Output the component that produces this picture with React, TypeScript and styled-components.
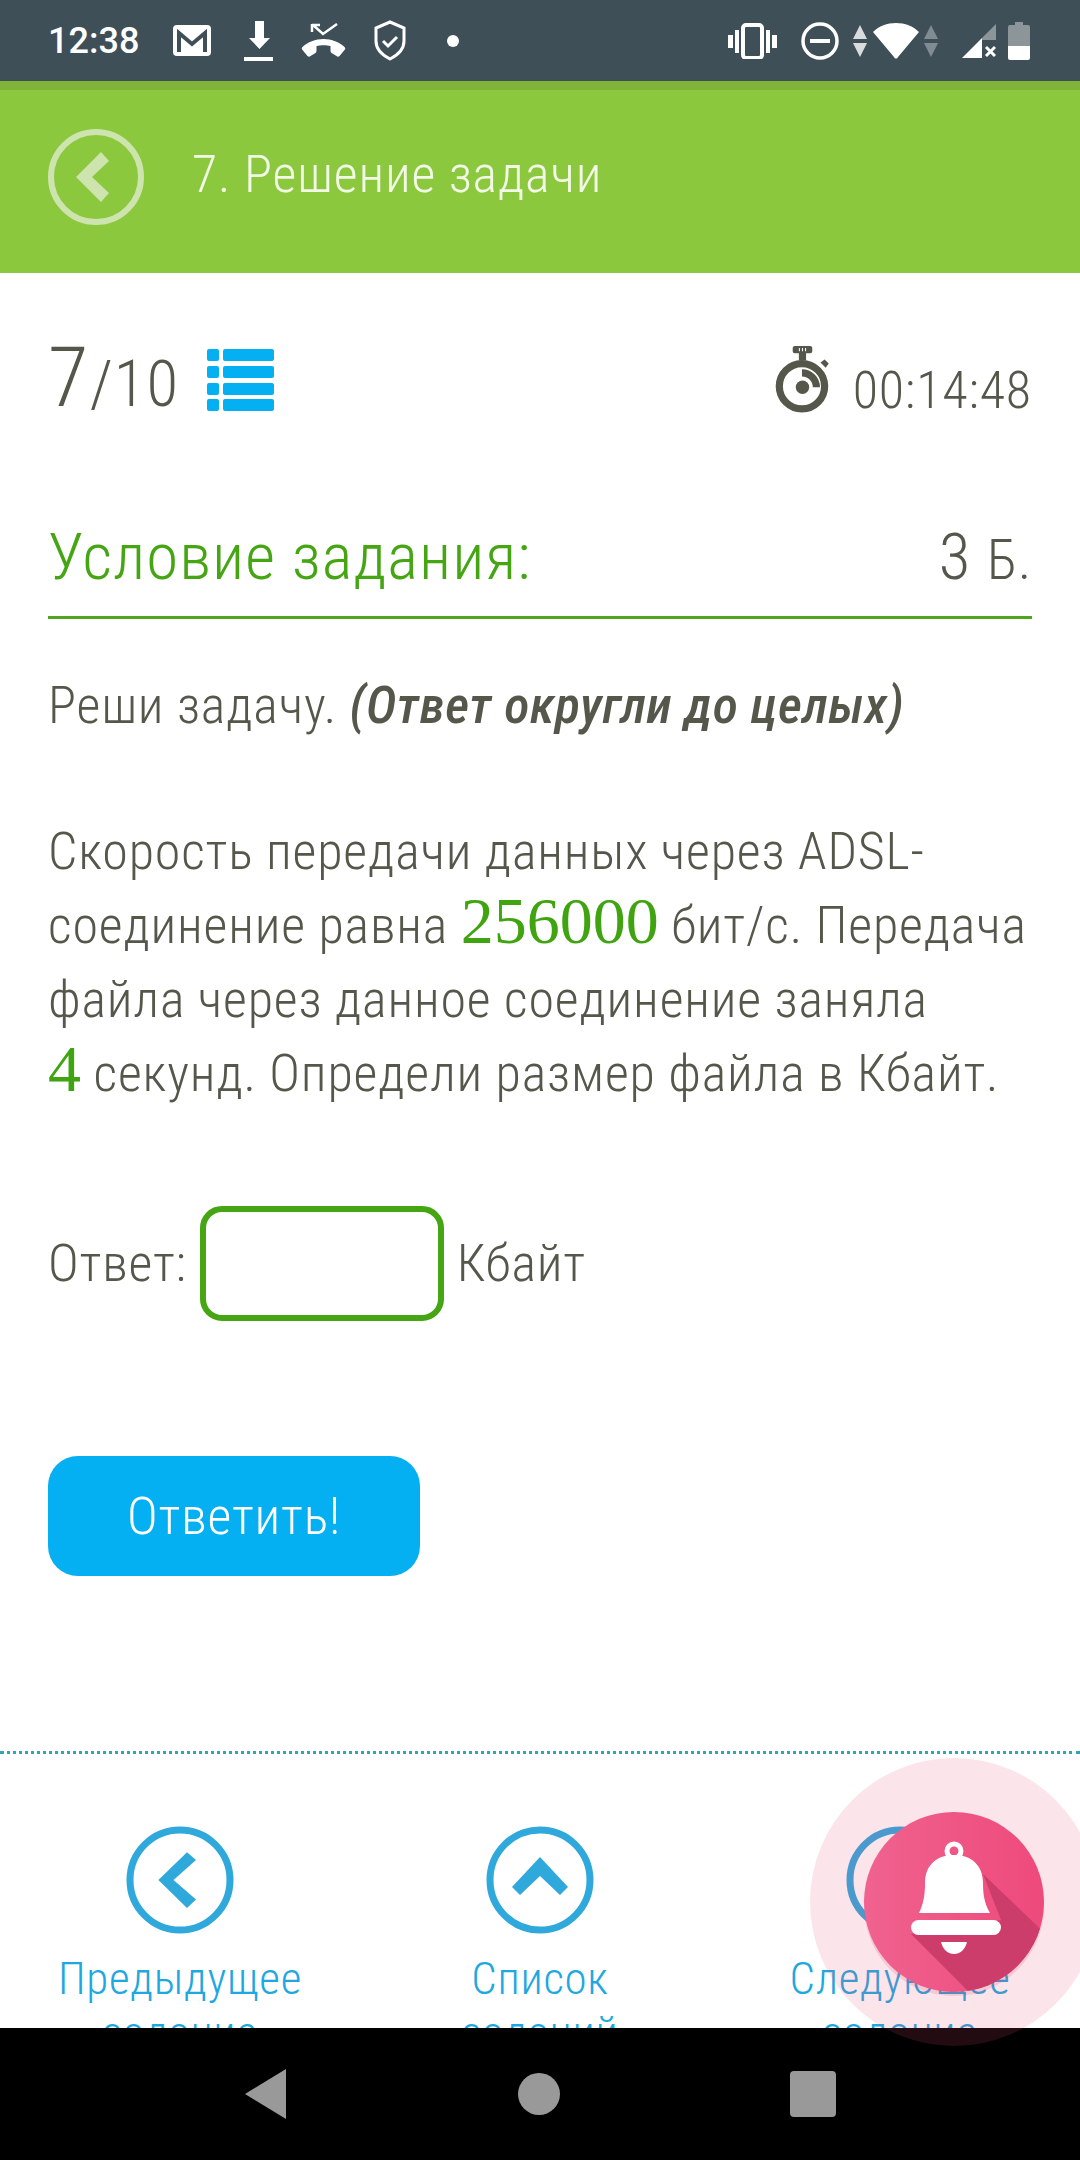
import React from 'react'
import styled, {createGlobalStyle} from 'styled-components'

const GlobalStyle = createGlobalStyle`
  html, body {
    margin: 0;
    padding: 0;
    background: #fff;
  }
  body {
    font-family: Roboto, "Noto Sans", sans-serif;
    font-weight: 300;
    font-stretch: 85%;
    color: #55574b;
  }
  * {
    letter-spacing: 0.016em;
  }
`

const Screen = styled.div`
  position: relative;
  width: 1080px;
  height: 2160px;
  display: flex;
  flex-direction: column;
  overflow: hidden;
  background: #fff;
`

const StatusBar = styled.div`
  height: 81px;
  flex: none;
  display: flex;
  align-items: center;
  padding: 0 50px 0 48px;
  background: #3e4f58;
`

const Clock = styled.span`
  font-size: 36px;
  font-weight: 500;
  font-stretch: 100%;
  letter-spacing: 0;
  color: #fff;
  width: 89px;
  margin-right: 36px;
`

const StatusIcon = styled.svg<{$left?: number}>`
  flex: none;
  margin-left: ${p => p.$left ?? 0}px;
`

const StatusRight = styled.div`
  margin-left: auto;
  display: flex;
  align-items: center;
`

const Header = styled.header`
  height: 192px;
  box-sizing: border-box;
  flex: none;
  display: flex;
  align-items: center;
  gap: 48px;
  padding: 0 0 9px 48px;
  background: #8bc83e;
  border-top: 9px solid #7fb439;
`

const HeaderTitle = styled.h1`
  margin: 0 0 6px;
  font-size: 52px;
  font-weight: 300;
  color: #f2f9e6;
`

const Main = styled.main`
  flex: 1;
  min-height: 0;
  overflow: hidden;
  display: flex;
  flex-direction: column;
`

const Content = styled.div`
  padding: 72px 48px 0;
  height: 1481px;
  box-sizing: border-box;
  flex: none;
  border-bottom: 3px dotted #30a5b5;
`

const TopRow = styled.div`
  display: flex;
  align-items: flex-end;
  height: 78px;
`

const Progress = styled.div`
  font-size: 65px;
  line-height: 78px;
  display: flex;
  align-items: baseline;
`

const ProgressCurrent = styled.span`
  font-size: 83px;
`

const ListIcon = styled.svg`
  margin: 0 0 12px 28px;
  align-self: flex-end;
`

const Timer = styled.div`
  margin-left: auto;
  display: flex;
  align-items: flex-end;
  gap: 22px;
  font-size: 52px;
  line-height: 64px;
`

const StopwatchIcon = styled.svg`
  margin-bottom: 10px;
`

const TaskHead = styled.div`
  margin-top: 90px;
  height: 106px;
  box-sizing: border-box;
  padding-bottom: 16px;
  border-bottom: 3px solid #4ea520;
  display: flex;
  justify-content: space-between;
  align-items: center;
`

const TaskTitle = styled.h2`
  margin: 0;
  font-size: 65px;
  font-weight: 300;
  color: #45a512;
`

const TaskPoints = styled.span`
  font-size: 65px;
`

const PointsUnit = styled.span`
  font-size: 55px;
`

const Paragraph = styled.p<{$top: number}>`
  margin: ${p => p.$top}px 0 0;
  font-size: 52px;
  line-height: 74px;
`

const Hint = styled.em`
  font-style: italic;
  font-weight: 500;
  letter-spacing: 0.008em;
`

const MathValue = styled.span`
  font-family: "Liberation Serif", serif;
  font-size: 66px;
  line-height: 0;
  font-weight: 400;
  font-stretch: 100%;
  letter-spacing: 0;
  color: #3fa40f;
`

const AnswerRow = styled.div`
  margin-top: 95px;
  display: flex;
  align-items: center;
  gap: 13px;
  font-size: 52px;
`

const AnswerInput = styled.div`
  width: 244px;
  height: 115px;
  box-sizing: border-box;
  border: 6px solid #45a512;
  border-radius: 22px;
`

const SubmitButton = styled.button`
  display: block;
  margin-top: 135px;
  width: 372px;
  height: 120px;
  border: 0;
  border-radius: 30px;
  background: #04aff2;
  color: #fff;
  font-family: inherit;
  font-stretch: inherit;
  font-size: 52px;
  font-weight: 300;
`

const TaskNav = styled.nav`
  display: grid;
  grid-template-columns: repeat(3, 1fr);
  padding: 72px 0 0;
  justify-items: center;
`

const NavItem = styled.a`
  display: flex;
  flex-direction: column;
  align-items: center;
  width: 300px;
  text-align: center;
  font-size: 45px;
  line-height: 54px;
  color: #1fa8df;
`

const NavCircle = styled.svg`
  margin-bottom: 18px;
`

const SystemNav = styled.div`
  height: 132px;
  flex: none;
  background: #000;
  display: flex;
  align-items: center;
  justify-content: center;
  gap: 230px;
`

const BellButton = styled.svg`
  position: absolute;
  left: 810px;
  top: 1758px;
`

function Chevron({points}: {points: string}) {
  return (
    <NavCircle width="108" height="108" viewBox="-54 -54 108 108">
      <circle r="50" fill="none" stroke="#2fa8dc" strokeWidth="7" />
      <polygon points={points} fill="#2fa8dc" />
    </NavCircle>
  )
}

const CHEVRON_LEFT = '-21.6,0 7,-27.7 16,-20 -6.5,0 16,19.5 7,28'
const CHEVRON_UP = '0,-23 -28,7 -20,15 0,-4 20,15 28,7'

export default function App() {
  return (
    <Screen>
      <GlobalStyle />
      <StatusBar>
        <Clock>12:38</Clock>
        <StatusIcon width="38" height="31" viewBox="0 0 38 31">
          <rect width="38" height="31" rx="4" fill="#fff" />
          <path fill="none" stroke="#3e4f58" strokeWidth="4" d="M6 27V8l13 11L32 8v19" />
        </StatusIcon>
        <StatusIcon $left={33} width="29" height="40" viewBox="0 0 29 40">
          <path fill="#fff" d="M11 0h9v17h6L15.500 28 5 17h6zM0 36h29v4H0z" />
        </StatusIcon>
        <StatusIcon $left={28} width="45" height="36" viewBox="0 0 45 36">
          <path fill="none" stroke="#fff" strokeWidth="2.500" d="M12 2l10 9L36 1M11 1v8M11 2h8" />
          <path
            fill="#fff"
            d="M22.500 16c8 0 16 3 21 8 1 1 1 2 0 3l-5 6c-1 1-2 1-3 0l-5-3c-1-1-1-2-1-3v-4c-4-1-10-1-14 0v4c0 1 0 2-1 3l-5 3c-1 1-2 1-3 0l-5-6c-1-1-1-2 0-3 5-5 13-8 21-8z"
          />
        </StatusIcon>
        <StatusIcon $left={28} width="32" height="41" viewBox="0 0 32 41">
          <path fill="none" stroke="#fff" strokeWidth="3" d="M16 2l14 6v13c0 8-6 14-14 18C8 35 2 29 2 21V8z" />
          <path fill="none" stroke="#fff" strokeWidth="3" d="M9 21l5 5 9-9" />
        </StatusIcon>
        <StatusIcon $left={41} width="12" height="12" viewBox="0 0 12 12">
          <circle cx="6" cy="6" r="6" fill="#fff" />
        </StatusIcon>
        <StatusRight>
          <StatusIcon width="49" height="36" viewBox="0 0 49 36">
            <path fill="#fff" d="M0 12h5v13H0zM44 12h5v13h-5zM7 7h4v23H7zM38 7h4v23h-4z" />
            <rect x="15" y="2" width="19" height="33" rx="3" fill="none" stroke="#fff" strokeWidth="4" />
          </StatusIcon>
          <StatusIcon $left={24} width="38" height="38" viewBox="0 0 38 38">
            <circle cx="19" cy="19" r="17" fill="none" stroke="#fff" strokeWidth="3.500" />
            <path fill="#fff" d="M9 17h20v4H9z" />
          </StatusIcon>
          <StatusIcon $left={14} width="14" height="32" viewBox="0 0 14 32">
            <path fill="#fff" fillOpacity=".8" d="M7 0l7 14H0zM0 18h14L7 32z" />
          </StatusIcon>
          <StatusIcon $left={6} width="46" height="36" viewBox="0 0 46 36">
            <path fill="#fff" d="M0 9C6 3 14 0 23 0s17 3 23 9L25 34c-1 2-3 2-4 0z" />
          </StatusIcon>
          <StatusIcon $left={5} width="14" height="32" viewBox="0 0 14 32">
            <path fill="#fff" fillOpacity=".35" d="M7 0l7 14H0zM0 18h14L7 32z" />
          </StatusIcon>
          <StatusIcon $left={24} width="34" height="34" viewBox="0 0 34 34">
            <path fill="#fff" fillOpacity=".4" d="M34 0v16H20V14z" />
            <path fill="#fff" d="M0 34L20 14v20z" />
            <path fill="none" stroke="#fff" strokeWidth="3" d="M24 23l9 9M33 23l-9 9" />
          </StatusIcon>
          <StatusIcon $left={12} width="22" height="38" viewBox="0 0 22 38">
            <path fill="#fff" fillOpacity=".4" d="M7 0h8v3h5a2 2 0 0 1 2 2v19H0V5a2 2 0 0 1 2-2h5z" />
            <path fill="#fff" d="M0 24h22v12a2 2 0 0 1-2 2H2a2 2 0 0 1-2-2z" />
          </StatusIcon>
        </StatusRight>
      </StatusBar>
      <Header>
        <svg width="96" height="96" viewBox="-48 -48 96 96">
          <circle r="45" fill="none" stroke="#cde4ae" strokeWidth="6" />
          <polygon points="-20,0 5,-25 13,-16 -4,0 13,16 5,25" fill="#cde4ae" />
        </svg>
        <HeaderTitle>7. Решение задачи</HeaderTitle>
      </Header>
      <Main>
        <Content>
          <TopRow>
            <Progress>
              <ProgressCurrent>7</ProgressCurrent>/10
            </Progress>
            <ListIcon width="67" height="62" viewBox="0 0 67 62">
              <path
                fill="#04aff2"
                d="M2 0h8a2 2 0 0 1 2 2v8a2 2 0 0 1-2 2H2a2 2 0 0 1-2-2V2a2 2 0 0 1 2-2zM18 0h47a2 2 0 0 1 2 2v8a2 2 0 0 1-2 2H18a2 2 0 0 1-2-2V2a2 2 0 0 1 2-2z"
              />
              <path
                fill="#04aff2"
                d="M2 17h8a2 2 0 0 1 2 2v8a2 2 0 0 1-2 2H2a2 2 0 0 1-2-2v-8a2 2 0 0 1 2-2zM18 17h47a2 2 0 0 1 2 2v8a2 2 0 0 1-2 2H18a2 2 0 0 1-2-2v-8a2 2 0 0 1 2-2z"
              />
              <path
                fill="#04aff2"
                d="M2 34h8a2 2 0 0 1 2 2v8a2 2 0 0 1-2 2H2a2 2 0 0 1-2-2v-8a2 2 0 0 1 2-2zM18 34h47a2 2 0 0 1 2 2v8a2 2 0 0 1-2 2H18a2 2 0 0 1-2-2v-8a2 2 0 0 1 2-2z"
              />
              <path
                fill="#04aff2"
                d="M2 50h8a2 2 0 0 1 2 2v8a2 2 0 0 1-2 2H2a2 2 0 0 1-2-2v-8a2 2 0 0 1 2-2zM18 50h47a2 2 0 0 1 2 2v8a2 2 0 0 1-2 2H18a2 2 0 0 1-2-2v-8a2 2 0 0 1 2-2z"
              />
            </ListIcon>
            <Timer>
              <StopwatchIcon width="56" height="68" viewBox="0 0 54 66">
                <path
                  fill="#55574b"
                  fillRule="evenodd"
                  d="M19 1h15a2 2 0 0 1 2 2v3a2 2 0 0 1-2 2h-4v7h-7V8h-4a2 2 0 0 1-2-2V3a2 2 0 0 1 2-2zM23 3v3h1V3zM26 3v3h1V3zM29 3v3h1V3z"
                />
                <circle cx="26" cy="40" r="22" fill="none" stroke="#55574b" strokeWidth="7" />
                <path fill="#55574b" d="M44 17l4-3 4 4-3 4z" />
                <circle cx="26.500" cy="41" r="6.500" fill="#55574b" />
                <path fill="none" stroke="#55574b" strokeWidth="7" d="M26 27a14 14 0 0 1 14 14" />
              </StopwatchIcon>
              00:14:48
            </Timer>
          </TopRow>
          <TaskHead>
            <TaskTitle>Условие задания:</TaskTitle>
            <TaskPoints>
              3 <PointsUnit>Б.</PointsUnit>
            </TaskPoints>
          </TaskHead>
          <Paragraph $top={50}>
            Реши задачу. <Hint>(Ответ округли до целых)</Hint>
          </Paragraph>
          <Paragraph $top={72}>
            Скорость передачи данных через ADSL-соединение равна <MathValue>256000</MathValue> бит/с. Передача файла
            через данное соединение заняла
            <br />
            <MathValue>4</MathValue> секунд. Определи размер файла в Кбайт.
          </Paragraph>
          <AnswerRow>
            Ответ:
            <AnswerInput />
            Кбайт
          </AnswerRow>
          <SubmitButton>Ответить!</SubmitButton>
        </Content>
        <TaskNav>
          <NavItem>
            <Chevron points={CHEVRON_LEFT} />
            Предыдущее задание
          </NavItem>
          <NavItem>
            <Chevron points={CHEVRON_UP} />
            Список заданий
          </NavItem>
          <NavItem>
            <Chevron points={CHEVRON_LEFT} />
            Следующее задание
          </NavItem>
        </TaskNav>
      </Main>
      <SystemNav>
        <svg width="44" height="50" viewBox="0 0 44 50">
          <path fill="#999" d="M42 0v50L1 25z" />
        </svg>
        <svg width="42" height="42" viewBox="0 0 42 42">
          <circle cx="21" cy="21" r="21" fill="#999" />
        </svg>
        <svg width="46" height="46" viewBox="0 0 46 46">
          <rect width="46" height="46" rx="4" fill="#999" />
        </svg>
      </SystemNav>
      <BellButton width="288" height="288" viewBox="-144 -144 288 288">
        <defs>
          <linearGradient id="bellFill" x1="0" y1="0" x2="1" y2="0">
            <stop offset="0" stopColor="#f0628f" />
            <stop offset="1" stopColor="#ee4a7b" />
          </linearGradient>
          <clipPath id="bellClip">
            <circle r="90" />
          </clipPath>
        </defs>
        <circle r="144" fill="#ee4a7b" fillOpacity=".15" />
        <circle cy="4" r="90" fill="#d0385f" fillOpacity=".16" />
        <circle r="90" fill="url(#bellFill)" />
        <g clipPath="url(#bellClip)">
          <polygon points="29,-28 100,40 100,100 25,100 -43,32 47,18" fill="#cd3d6b" />
        </g>
        <g transform="translate(-90 -90)">
          <circle cx="90" cy="39" r="7" fill="none" stroke="#fff" strokeWidth="5" />
          <path fill="#fff" d="M55 101c5-10 6-20 6-30 0-18 12-28 29-28s29 10 29 28c0 10 1 20 7 30z" />
          <rect x="47" y="108" width="90" height="15" rx="7.500" fill="#fff" />
          <path fill="#fff" d="M77 130h26c-2 8-7 12-13 12s-11-4-13-12z" />
        </g>
      </BellButton>
    </Screen>
  )
}
